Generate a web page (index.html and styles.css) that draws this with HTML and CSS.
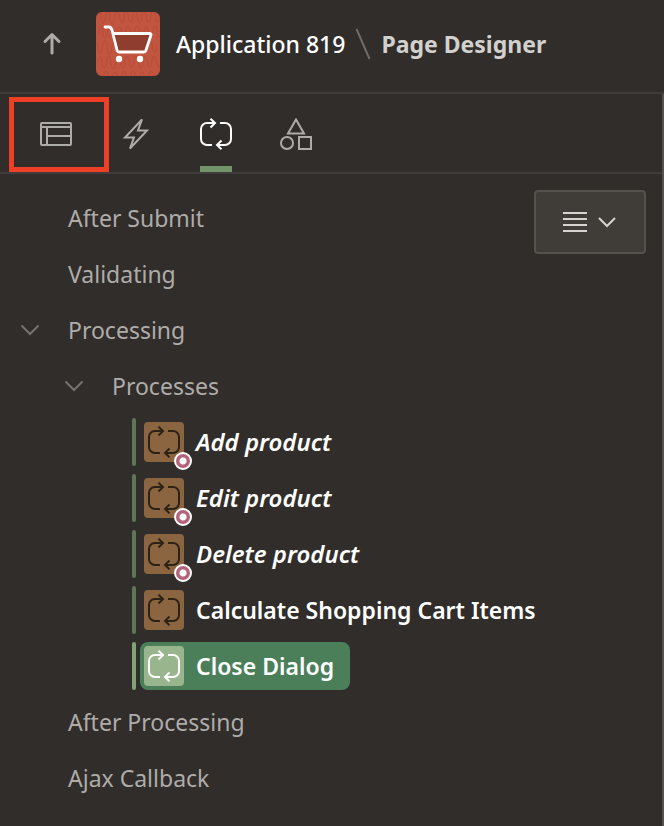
FILE: index.html
```html
<!DOCTYPE html>
<html lang="en">
<head>
<meta charset="utf-8">
<title>Page Designer</title>
<link rel="stylesheet" href="styles.css">
</head>
<body>
<svg class="sprite" aria-hidden="true">
  <symbol id="process" viewBox="0 0 32 32">
    <path d="M12 27H7a6 6 0 0 1-6-6V11a6 6 0 0 1 6-6h8M10.500 .8L15 5l-4.500 4.500M20 5h5a6 6 0 0 1 6 6v10a6 6 0 0 1-6 6h-8M21.500 22.500L17 27l4.500 4.200"/>
  </symbol>
  <symbol id="chevron" viewBox="0 0 20 12">
    <path d="M2 2l8 8 8-8"/>
  </symbol>
  <symbol id="wave" viewBox="0 0 64 16">
    <path d="M-2 12c3 0 2-10 5-10s1 11 4 11 2-12 5-12 1 12 4 13 2-11 5-12 2 10 5 11 1-13 4-12 2 12 5 11 1-11 4-11 2 13 5 12 1-11 4-11 2 11 5 10 1-12 4-11 2 12 5 11 1-10 4-10"/>
  </symbol>
</svg>
<header class="header">
  <button class="up" type="button" aria-label="Up">
    <svg class="up-icon" viewBox="0 0 24 24"><path d="M12 21V3M5 9.500L12 2.500l7 7"/></svg>
  </button>
  <svg class="app-icon" viewBox="0 0 64 64" aria-hidden="true">
    <rect width="64" height="64" fill="#c25540"/>
    <g class="waves">
      <use href="#wave" y="-2" width="64" height="16"/>
      <use href="#wave" x="2" y="13" width="64" height="16"/>
      <use href="#wave" x="-3" y="28" width="64" height="16"/>
      <use href="#wave" x="1" y="43" width="64" height="16"/>
      <use href="#wave" x="-2" y="58" width="64" height="16"/>
    </g>
    <path d="M17 22h38l-6 18H21z" fill="#8f3d2f"/>
    <path d="M9 15h4q2 0 3 3l5 20q.5 2 2 2h25q1.500 0 2-2l5-15q.5-1.500-1.500-1.500H17" fill="none" stroke="#fff" stroke-width="2.800" stroke-linecap="round" stroke-linejoin="round"/>
    <circle cx="23" cy="47" r="3.200" fill="#fff"/><circle cx="44" cy="47" r="3.200" fill="#fff"/>
  </svg>
  <nav class="crumbs" aria-label="Breadcrumb">
    <a class="crumb" href="#">Application 819</a>
    <svg class="slash" viewBox="0 0 16 32" aria-hidden="true"><path d="M1.500 1l13 30"/></svg>
    <h1 class="crumb current">Page Designer</h1>
  </nav>
</header>
<main class="pane">
  <nav class="tabs" aria-label="Views">
    <button class="tab marked" type="button" aria-label="Rendering">
      <svg class="tab-icon" viewBox="0 0 32 32"><path d="M2 5h28q1 0 1 1v20q0 1-1 1H2q-1 0-1-1V6q0-1 1-1zM1 9h30M7 9v18M7 18h24"/></svg>
    </button>
    <button class="tab" type="button" aria-label="Dynamic Actions">
      <svg class="tab-icon" viewBox="0 0 32 32"><path d="M22 1.500L5 19.500h9l-4 11 17-18h-9z"/></svg>
    </button>
    <button class="tab active" type="button" aria-label="Processing">
      <svg class="tab-icon"><use href="#process"/></svg>
    </button>
    <button class="tab" type="button" aria-label="Shared Components">
      <svg class="tab-icon" viewBox="0 0 32 32"><path d="M16 1.500l8 14H8zM19 19h12v12H19z"/><circle cx="7" cy="25" r="6"/></svg>
    </button>
  </nav>
  <div class="body">
    <ul class="tree">
      <li><div class="row">After Submit</div></li>
      <li><div class="row">Validating</div></li>
      <li>
        <div class="row"><button class="toggle" type="button" aria-label="Toggle Processing"><svg class="chevron"><use href="#chevron"/></svg></button>Processing</div>
        <ul class="group">
          <li>
            <div class="row"><button class="toggle" type="button" aria-label="Toggle Processes"><svg class="chevron"><use href="#chevron"/></svg></button>Processes</div>
            <ul class="items">
              <li class="item conditional"><a class="node" href="#"><span class="tile"><svg class="tile-icon"><use href="#process"/></svg><span class="badge"></span></span>Add product</a></li>
              <li class="item conditional"><a class="node" href="#"><span class="tile"><svg class="tile-icon"><use href="#process"/></svg><span class="badge"></span></span>Edit product</a></li>
              <li class="item conditional"><a class="node" href="#"><span class="tile"><svg class="tile-icon"><use href="#process"/></svg><span class="badge"></span></span>Delete product</a></li>
              <li class="item"><a class="node" href="#"><span class="tile"><svg class="tile-icon"><use href="#process"/></svg></span>Calculate Shopping Cart Items</a></li>
              <li class="item selected"><a class="node" href="#"><span class="tile"><svg class="tile-icon"><use href="#process"/></svg></span>Close Dialog</a></li>
            </ul>
          </li>
        </ul>
      </li>
      <li><div class="row">After Processing</div></li>
      <li><div class="row">Ajax Callback</div></li>
    </ul>
    <button class="menu" type="button" aria-label="Menu">
      <svg class="menu-icon" viewBox="0 0 24 24"><path d="M0 3h24M0 9h24M0 15h24M0 21h24"/></svg>
      <svg class="chevron"><use href="#chevron"/></svg>
    </button>
  </div>
</main>
</body>
</html>
```
FILE: styles.css
```css
* {
  box-sizing: border-box;
}

body {
  display: flex;
  flex-direction: column;
  min-height: 100vh;
  margin: 0;
  background: #312d2a;
  color: #aeaca9;
  font: 23px/32px "Noto Sans", "Open Sans", sans-serif;
}

button {
  padding: 0;
  border: 0;
  background: none;
  color: inherit;
  font: inherit;
}

a {
  color: inherit;
  text-decoration: none;
}

ul {
  margin: 0;
  padding: 0;
  list-style: none;
}

svg {
  display: block;
  flex: none;
  fill: none;
  stroke: currentColor;
  stroke-width: 2px;
}

.sprite {
  position: absolute;
  width: 0;
  height: 0;
}

.header {
  display: flex;
  align-items: center;
  gap: 16px;
  padding: 12px 24px 16px;
  border-bottom: 2px solid #403c39;
}

.up {
  display: grid;
  place-items: center;
  width: 56px;
  height: 64px;
}

.up-icon {
  width: 24px;
  height: 24px;
  stroke-width: 3px;
  stroke-linecap: round;
  stroke-linejoin: round;
}

.app-icon {
  width: 64px;
  height: 64px;
  border-radius: 6px;
  stroke: none;
}

.waves {
  stroke: #b64d3a;
  stroke-width: 1px;
}

.crumbs {
  display: flex;
  align-items: center;
  gap: 10px;
  white-space: nowrap;
}

.crumb {
  margin: 0;
  color: #fff;
  font-size: 23px;
  font-weight: 500;
}

.current {
  color: #d3d1ce;
  font-weight: 700;
}

.slash {
  width: 16px;
  height: 32px;
  color: #6e6b68;
}

.pane {
  flex: 1;
  border-right: 2px solid #55514d;
}

.tabs {
  display: flex;
  padding: 0 16px;
  border-bottom: 2px solid #403c39;
}

.tab {
  position: relative;
  display: grid;
  place-items: center;
  width: 80px;
  height: 78px;
  padding-top: 2px;
}

.tab-icon {
  width: 32px;
  height: 32px;
}

.active {
  color: #fff;
}

.active::after {
  content: "";
  position: absolute;
  bottom: 0;
  left: 24px;
  width: 32px;
  height: 6px;
  background: #739468;
}

.marked::after {
  content: "";
  position: absolute;
  inset: 3px -13px 0 -7px;
  border: 5px solid #ee4026;
}

.body {
  display: flex;
  align-items: flex-start;
  padding: 16px;
}

.tree {
  flex: 1;
  min-width: 0;
  padding: 4px 0;
}

.tree,
.group,
.items {
  display: grid;
  grid-template-columns: minmax(0, 1fr);
  gap: 8px;
}

.group {
  margin-top: 8px;
  padding-left: 44px;
}

.items {
  margin-top: 8px;
  padding-left: 72px;
}

.row {
  display: flex;
  align-items: center;
  height: 48px;
  padding-left: 52px;
}

.toggle {
  display: grid;
  place-items: center;
  width: 28px;
  height: 48px;
  margin-right: 24px;
  margin-left: -52px;
  color: #75726f;
  stroke-linecap: round;
}

.chevron {
  width: 20px;
  height: 12px;
}

.item {
  display: flex;
  gap: 4px;
  color: #fff;
  font-weight: 600;
  white-space: nowrap;
}

.item::before {
  content: "";
  flex: none;
  width: 4px;
  border-radius: 2px;
  background: #5d7756;
}

.node {
  display: flex;
  align-items: center;
  gap: 12px;
  height: 48px;
  padding: 0 16px 0 4px;
  border-radius: 8px;
}

.conditional {
  font-size: 24px;
  font-style: italic;
}

.tile {
  position: relative;
  display: grid;
  place-items: center;
  width: 40px;
  height: 40px;
  border-radius: 4px;
  background: #8b6440;
  color: #2c2218;
}

.tile-icon {
  width: 32px;
  height: 32px;
}

.badge {
  position: absolute;
  right: -8px;
  bottom: -8px;
  width: 18px;
  height: 18px;
  border: 2px solid #fff;
  border-radius: 50%;
  background: radial-gradient(circle, #fff 3px, #b3647b 4px);
}

.selected::before {
  background: #81a377;
}

.selected .node {
  background: #4b7f5a;
}

.selected .tile {
  background: #98b58e;
  color: #fff;
}

.menu {
  display: flex;
  flex: none;
  align-items: center;
  justify-content: center;
  gap: 10px;
  width: 112px;
  height: 64px;
  border: 2px solid #55514d;
  border-radius: 4px;
  background: #403c38;
  color: #d6d4d0;
}

.menu-icon {
  width: 24px;
  height: 24px;
}
```
